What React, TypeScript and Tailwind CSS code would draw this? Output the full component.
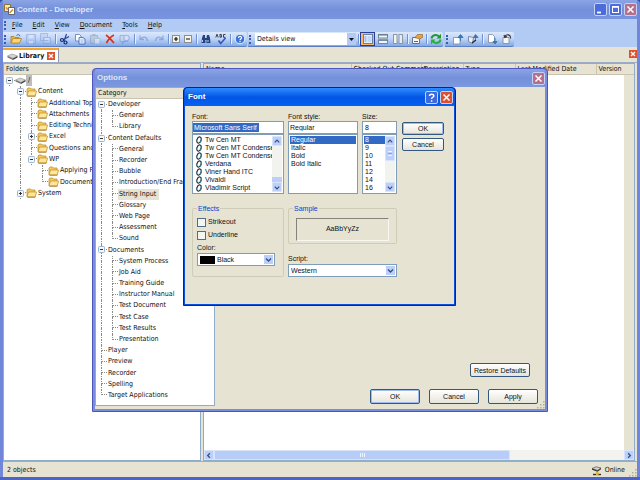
import type { ReactNode } from "react";
import clsx from "clsx";

type Guide = "none" | "line" | "tee" | "end" | "plus" | "minus" | "root";

type Node = { label: string; guides: Guide[]; selected?: boolean };

const folders: Node[] = [
  { label: "Content", guides: ["none", "minus"] },
  { label: "Additional Topics", guides: ["none", "line", "tee"] },
  { label: "Attachments", guides: ["none", "line", "tee"] },
  { label: "Editing Techniques", guides: ["none", "line", "tee"] },
  { label: "Excel", guides: ["none", "line", "plus"] },
  { label: "Questions and Answers", guides: ["none", "line", "tee"] },
  { label: "WP", guides: ["none", "line", "minus"] },
  { label: "Applying Formats", guides: ["none", "line", "none", "tee"] },
  { label: "Document Basics", guides: ["none", "line", "none", "end"] },
  { label: "System", guides: ["none", "plus"] },
];

const categories: Node[] = [
  { label: "Developer", guides: ["root"] },
  { label: "General", guides: ["line", "tee"] },
  { label: "Library", guides: ["line", "end"] },
  { label: "Content Defaults", guides: ["minus"] },
  { label: "General", guides: ["line", "tee"] },
  { label: "Recorder", guides: ["line", "tee"] },
  { label: "Bubble", guides: ["line", "tee"] },
  { label: "Introduction/End Frames", guides: ["line", "tee"] },
  { label: "String Input", guides: ["line", "tee"], selected: true },
  { label: "Glossary", guides: ["line", "tee"] },
  { label: "Web Page", guides: ["line", "tee"] },
  { label: "Assessment", guides: ["line", "tee"] },
  { label: "Sound", guides: ["line", "end"] },
  { label: "Documents", guides: ["minus"] },
  { label: "System Process", guides: ["line", "tee"] },
  { label: "Job Aid", guides: ["line", "tee"] },
  { label: "Training Guide", guides: ["line", "tee"] },
  { label: "Instructor Manual", guides: ["line", "tee"] },
  { label: "Test Document", guides: ["line", "tee"] },
  { label: "Test Case", guides: ["line", "tee"] },
  { label: "Test Results", guides: ["line", "tee"] },
  { label: "Presentation", guides: ["line", "end"] },
  { label: "Player", guides: ["tee"] },
  { label: "Preview", guides: ["tee"] },
  { label: "Recorder", guides: ["tee"] },
  { label: "Spelling", guides: ["tee"] },
  { label: "Target Applications", guides: ["end"] },
];

const fonts = [
  "Tw Cen MT",
  "Tw Cen MT Condensed",
  "Tw Cen MT Condensed Extra",
  "Verdana",
  "Viner Hand ITC",
  "Vivaldi",
  "Vladimir Script",
];

function GuideCell({ kind }: { kind: Guide }) {
  const boxed = kind === "plus" || kind === "minus" || kind === "root";
  return (
    <span className="relative flex w-[11px] shrink-0 flex-col self-stretch pl-[5px]">
      {kind !== "none" && (
        <>
          <span
            className={clsx(
              "h-1/2 border-dotted border-[#8a8a86]",
              kind !== "root" && "border-l",
              kind !== "line" && "border-b"
            )}
          />
          <span
            className={clsx("h-1/2 border-dotted border-[#8a8a86]", kind !== "end" && "border-l")}
          />
        </>
      )}
      {boxed && (
        <svg viewBox="0 0 7 7" className="absolute left-[2px] top-[2px] h-[7px] w-[7px]">
          <rect x=".5" y=".5" width="6" height="6" rx="1" fill="#f4f6f8" stroke="#9cb4d0" />
          <path d="M2 3.5h3" stroke="#333" />
          {kind === "plus" && <path d="M3.5 2v3" stroke="#333" />}
        </svg>
      )}
    </span>
  );
}

function FolderIcon() {
  return (
    <svg viewBox="0 0 11 10" className="h-[10px] w-[11px] shrink-0">
      <path d="M1 8.5V2l1-1h2.5l1 1H9v6.5z" fill="#f3c85a" stroke="#b98a28" strokeWidth=".7" />
      <path d="M1 9l1.5-5h8L9.300 9z" fill="#ffe79a" stroke="#c08a24" strokeWidth=".7" />
      <path d="M1.500 9.200h7.800" stroke="#94661a" strokeWidth=".7" />
    </svg>
  );
}

function DriveIcon() {
  return (
    <svg viewBox="0 0 11 9" className="h-[9px] w-[11px] shrink-0">
      <path d="M.5 4L5 2l5.500 2L6 6.500z" fill="#d4d4d2" stroke="#8a8a88" strokeWidth=".6" />
      <path d="M.5 4v1.500L6 8V6.500z" fill="#777" />
      <path d="M6 6.500v1.500l4.500-2.500V4z" fill="#444" />
    </svg>
  );
}

function CaptionButton({ kind, tone }: { kind: "min" | "max" | "close" | "help"; tone: string }) {
  return (
    <button
      type="button"
      aria-label={kind}
      className={clsx(
        "flex h-[13px] w-[13px] items-center justify-center rounded-[2px] border border-[#c4d2f4]",
        tone
      )}
    >
      <svg viewBox="0 0 11 11" className="h-[11px] w-[11px]" fill="none" stroke="#fff">
        {kind === "min" && <path d="M2 8.500h4" strokeWidth="1.800" />}
        {kind === "max" && (
          <>
            <rect x="2.500" y="2.500" width="6" height="6" />
            <path d="M2 3h7" strokeWidth="1.600" />
          </>
        )}
        {kind === "close" && <path d="M2.500 2.500l6 6M8.500 2.500l-6 6" strokeWidth="1.500" />}
        {kind === "help" && (
          <path d="M3.500 4C3.500 1.500 8 1.500 7.800 4 7.600 5.300 5.600 5.300 5.600 7M5.600 8.200v1.500" strokeWidth="1.500" />
        )}
      </svg>
    </button>
  );
}

function PushButton({ children, primary, className }: { children: ReactNode; primary?: boolean; className: string }) {
  return (
    <button
      type="button"
      className={clsx(
        "rounded-[2px] border border-[#33587e] bg-linear-to-b from-white to-[#e6e4da] text-center font-[Liberation_Sans,sans-serif] text-[7px] leading-[11px]",
        primary && "shadow-[inset_0_0_0_1px_#9dbcf2]",
        className
      )}
    >
      {children}
    </button>
  );
}

function Arrow({ dir }: { dir: "up" | "down" | "left" | "right" }) {
  const paths = {
    up: "M2 5.500L4.500 3 7 5.500",
    down: "M2 3.500L4.500 6 7 3.500",
    left: "M5.500 2L3 4.500 5.500 7",
    right: "M3.500 2L6 4.500 3.500 7",
  };
  return (
    <svg viewBox="0 0 9 9" className="h-[9px] w-[9px]">
      <path d={paths[dir]} fill="none" stroke="#36507c" strokeWidth="1.400" />
    </svg>
  );
}

function ScrollButton({ dir }: { dir: "up" | "down" | "left" | "right" }) {
  return (
    <button
      type="button"
      aria-label={`Scroll ${dir}`}
      className="flex h-[10px] w-[10px] shrink-0 items-center justify-center rounded-[1px] border border-[#d8e4fc] bg-[#bccffa]"
    >
      <Arrow dir={dir} />
    </button>
  );
}

function ToolButton({ label, children, narrow, off, on }: { label: string; children: ReactNode; narrow?: boolean; off?: boolean; on?: boolean }) {
  return (
    <button
      type="button"
      aria-label={label}
      disabled={off}
      className={clsx(
        "flex h-[14px] shrink-0 items-center justify-center",
        narrow ? "w-[12px]" : "w-[15px]",
        off && "opacity-50",
        on && "border border-[#2c3c94] bg-[#fbb668]"
      )}
    >
      <svg viewBox="0 0 12 12" className="h-[12px] w-[12px] shrink-0" fill="none">
        {children}
      </svg>
    </button>
  );
}

function Grip() {
  return <span className="mr-px ml-px h-[9px] w-[3px] shrink-0 border-l-2 border-dotted border-[#3c5da8]" />;
}

function Sep() {
  return (
    <span className="flex w-[4px] shrink-0 justify-center">
      <span className="h-[10px] w-px bg-[#6f92d0] shadow-[1px_0_0_#e8f0fe]" />
    </span>
  );
}

const groupClass =
  "flex h-[15px] items-center rounded-r-[2px] border-b border-[#5b80c4] bg-linear-to-b from-[#dbe8fd] via-[#bdd3f7] to-[#82a8e4]";

function Toolbar() {
  return (
    <div className="flex gap-px bg-[#b2cbf5]">
      <div className={groupClass}>
        <Grip />
        <ToolButton label="Open">
          <path d="M1 10V3.500h3l1 1h4V6" fill="#f0b840" stroke="#a87418" strokeWidth=".7" />
          <path d="M1 10l2-4.500h8.500L9.500 10z" fill="#ffd970" stroke="#a87418" strokeWidth=".7" />
          <path d="M6.500 2.500c1.500-1.500 3-1 3.500.7" stroke="#3a5ca8" />
        </ToolButton>
        <ToolButton label="Save" off>
          <path d="M1.500 1.500h9v9h-9z" fill="#a9bfe8" stroke="#7e9ad0" />
          <path d="M3.500 2h5v3.500h-5zM4 8h4v2.500H4z" fill="#e4edfc" />
        </ToolButton>
        <ToolButton label="Save all" off>
          <path d="M.5.5h7v7h-7zM3.500 4.500h7v6h-7z" fill="#bccdf0" stroke="#7e9ad0" />
          <path d="M5 5h4v2H5z" fill="#e4edfc" />
        </ToolButton>
        <Sep />
        <ToolButton label="Cut">
          <path d="M7.500 1L5 8M10 3.500L4 7" stroke="#26489a" strokeWidth="1.200" />
          <circle cx="3" cy="7" r="1.500" stroke="#122c74" strokeWidth="1.200" />
          <circle cx="6.500" cy="9.500" r="1.500" stroke="#122c74" strokeWidth="1.200" />
        </ToolButton>
        <ToolButton label="Copy">
          <path d="M1.500 1.500h4l1.500 1.500v5H1.500z" fill="#fff" stroke="#5478c0" strokeWidth=".8" />
          <path d="M5 4.500h4l2 1.500v5H5z" fill="#e8f0ff" stroke="#3c60b0" strokeWidth=".8" />
          <path d="M6.500 7h3M6.500 9h3" stroke="#7c9cdc" strokeWidth=".7" />
        </ToolButton>
        <ToolButton label="Paste" off>
          <path d="M1.500 2.500h7v8h-7z" fill="#b4bccc" stroke="#8491ad" />
          <path d="M3.500 1h3v2h-3z" fill="#8491ad" />
          <path d="M5.500 5.500h5.500v5.500H5.500z" fill="#eef3fc" stroke="#8aa" strokeWidth=".8" />
        </ToolButton>
        <ToolButton label="Delete">
          <path d="M2 2c3 2 5 5 8 8M10 2C7 3.500 4 7 2.500 10" stroke="#d8321a" strokeWidth="1.700" />
        </ToolButton>
        <ToolButton label="Properties" off>
          <path d="M1 2.500h8v6H1z" fill="#c6d4ee" stroke="#6f8cc4" />
          <circle cx="7.500" cy="5" r="2.800" fill="#dfe9fb" stroke="#6f8cc4" />
          <path d="M3 11l3-3.500" stroke="#6f8cc4" strokeWidth="1.400" />
        </ToolButton>
        <Sep />
        <ToolButton label="Undo" off>
          <path d="M2 2.500v4h4M2 6.500C4.500 3 9 3 9.500 8" stroke="#5b7fc8" strokeWidth="1.300" />
        </ToolButton>
        <ToolButton label="Redo" off>
          <path d="M10 2.500v4H6M10 6.500C7.500 3 3 3 2.500 8" stroke="#5b7fc8" strokeWidth="1.300" />
        </ToolButton>
        <Sep />
        <ToolButton label="Expand" narrow>
          <rect x="2.500" y="2.500" width="7" height="7" fill="#f7f5e8" stroke="#8a8f98" />
          <path d="M4 6h4M6 4v4" stroke="#111" strokeWidth="1.200" />
        </ToolButton>
        <ToolButton label="Collapse" narrow>
          <rect x="2.500" y="2.500" width="7" height="7" fill="#f7f5e8" stroke="#8a8f98" />
          <path d="M4 6h4" stroke="#333" strokeWidth="1.200" />
        </ToolButton>
        <Sep />
        <ToolButton label="Find">
          <path d="M3 2h2v3l.5 5H1.500l.5-5zM7 2h2l1 3 .5 5h-4L6.500 5z" fill="#23427e" />
          <path d="M5 5h2v2H5z" fill="#23427e" />
          <path d="M2.500 7v2M8 7v2" stroke="#b8d0f4" />
        </ToolButton>
        <ToolButton label="Spelling">
          <path d="M.8 4.500L2 1.200l1.200 3.300M5 1.200v3h1.400V1.500H5M10.500 1.500H8.500v2.800h2" stroke="#333" strokeWidth=".9" />
          <path d="M3.500 7.500l2.200 3L10.500 5" stroke="#3559b4" strokeWidth="1.600" />
        </ToolButton>
        <Sep />
        <ToolButton label="Help">
          <circle cx="6" cy="6" r="4.800" fill="#3c74d4" stroke="#e8f0fc" />
          <path d="M4.500 5C4.500 2.800 7.800 3 7.500 5 7.300 6 6 6 6 7.200M6 8v1.200" stroke="#fff" strokeWidth="1.200" />
        </ToolButton>
      </div>
      <div className={groupClass}>
        <Grip />
        <div className="relative ml-[2px] flex h-[12px] w-[101px] items-center bg-white">
          <select aria-label="View" className="h-[12px] w-full appearance-none pl-[2px] leading-[12px]">
            <option>Details view</option>
          </select>
          <span className="pointer-events-none absolute inset-y-0 right-0 flex w-[9px] items-center justify-center bg-[#b3caf4]">
            <svg viewBox="0 0 5 3" className="h-[3px] w-[5px]">
              <path d="M0 0h5L2.500 3z" fill="#111" />
            </svg>
          </span>
        </div>
        <Sep />
        <ToolButton label="Single pane" on>
          <rect x="1.500" y="1.500" width="9" height="9" fill="#e8f0fc" stroke="#68809c" />
          <path d="M2.500 3h2v6h-2z" fill="#a4c0ec" />
          <path d="M5.500 3h4v6h-4z" fill="#c2d8fa" />
        </ToolButton>
        <ToolButton label="Split rows">
          <rect x="1.500" y="1.500" width="9" height="3.500" fill="#f0f5fd" stroke="#74889c" />
          <rect x="1.500" y="7" width="9" height="3.500" fill="#f0f5fd" stroke="#74889c" />
          <path d="M1 2h10M1 7.200h10" stroke="#5e7688" />
        </ToolButton>
        <ToolButton label="Split columns">
          <rect x="1.500" y="1.500" width="3.500" height="9" fill="#f4f4ee" stroke="#8c98a4" />
          <rect x="7" y="1.500" width="3.500" height="9" fill="#e4ecf8" stroke="#8c98a4" />
        </ToolButton>
        <Sep />
        <ToolButton label="Properties">
          <path d="M1.500 4.500h7v6h-7z" fill="#f4f6fa" stroke="#62748c" />
          <path d="M3 8.500h4" stroke="#4a6898" />
          <path d="M4 4.500l2.500-3h5v3l-3 1.500z" fill="#e9a33c" stroke="#8a5a18" strokeWidth=".6" />
        </ToolButton>
        <Sep />
        <ToolButton label="Refresh">
          <path d="M1.500 5.500C2 2 6.500 1 9 3.500" stroke="#1f9a2c" strokeWidth="2" />
          <path d="M11 .8v4.700H6.500z" fill="#1f9a2c" />
          <path d="M10.500 6.500C10 10 5.500 11 3 8.500" stroke="#2bb038" strokeWidth="2" />
          <path d="M1 11.200V6.500h4.500z" fill="#2bb038" />
        </ToolButton>
      </div>
      <div className={clsx(groupClass, "ml-px")}>
        <Grip />
        <ToolButton label="Check in">
          <path d="M1.500 4.500h5l1.500 1v5.500H1.500z" fill="#fff" stroke="#7888a0" strokeWidth=".8" />
          <path d="M8.500 8V3.500M6 4.500L8.500 1.500 11 4.500z" fill="#3c78b0" stroke="#3c78b0" />
        </ToolButton>
        <ToolButton label="Undo check out">
          <path d="M1.500 3.500l5 1-1 6-4-2z" fill="#eee" stroke="#66768c" strokeWidth=".8" />
          <path d="M5 10l4-3" stroke="#223" strokeWidth="1.200" />
          <path d="M8.500 7V3.500M6.500 4.500L8.500 1.500 11 4.500z" fill="#3c78b0" stroke="#3c78b0" />
        </ToolButton>
        <Sep />
        <ToolButton label="Get version">
          <path d="M2.500 1.500h4l2 2v6h-6z" fill="#fff" stroke="#7888a0" strokeWidth=".8" />
          <path d="M9 5v4M7 8.500l2 2.500 2-2.500z" fill="#3c78b0" stroke="#3c78b0" />
        </ToolButton>
        <ToolButton label="History">
          <path d="M2 4.500h6v6H2z" fill="#f4f6fa" stroke="#7888a0" strokeWidth=".8" />
          <path d="M4 3.500C5.500.5 10 1.500 9.500 5.500M3 2l.8 2.500L6 3.500" stroke="#333" strokeWidth="1.100" />
        </ToolButton>
      </div>
    </div>
  );
}

function Tree({ nodes, icon }: { nodes: Node[]; icon?: boolean }) {
  return (
    <>
      {nodes.map((node, i) => (
        <li key={i} className="flex min-h-0 flex-1 items-center whitespace-nowrap">
          {node.guides.map((g, j) => (
            <GuideCell key={j} kind={g} />
          ))}
          {icon && <FolderIcon />}
          <span className={clsx("px-px leading-[11px]", node.selected && "bg-[#e6e3d3] pr-[3px]")}>
            {node.label}
          </span>
        </li>
      ))}
    </>
  );
}

function OptionsDialog() {
  return (
    <section
      aria-label="Options"
      className="absolute left-[92px] top-[68px] flex h-[344px] w-[456px] flex-col rounded-t-[4px] border border-[#4c56bc] bg-[#7a8cdc] px-[2px] pb-[2px]"
    >
      <header className="flex h-[18px] shrink-0 items-center justify-between rounded-t-[3px] bg-linear-to-b from-[#8ba4e6] via-[#7490da] to-[#7c98e0] pl-[2px]">
        <h2 className="font-[Liberation_Sans,sans-serif] text-[8px] font-bold text-[#dde6fa]">Options</h2>
        <CaptionButton kind="close" tone="bg-[#b4708c]" />
      </header>
      <div className="flex min-h-0 flex-1 bg-[#e6e3d3] pb-[3px]">
        <div className="flex w-[120px] shrink-0 flex-col overflow-hidden border border-[#8eaccc] bg-white">
          <h3 className="h-[11px] shrink-0 border-b border-[#c8c4b0] bg-[#e6e3d3] pl-[2px] leading-[10px]">Category</h3>
          <ul className="mb-[4px] flex flex-1 flex-col">
            <Tree nodes={categories} />
          </ul>
        </div>
        <div className="relative flex flex-1 flex-col items-end justify-end gap-[12px] pr-[7px] pb-[2px]">
          <PushButton className="mr-[8px] h-[14px] w-[60px]">Restore Defaults</PushButton>
          <div className="flex gap-[9px]">
            <PushButton primary className="h-[15px] w-[50px]">OK</PushButton>
            <PushButton className="h-[15px] w-[50px]">Cancel</PushButton>
            <PushButton className="h-[15px] w-[50px]">Apply</PushButton>
          </div>
          <SizeGrip className="absolute -bottom-[3px] right-0" />
        </div>
      </div>
    </section>
  );
}

function SizeGrip({ className }: { className?: string }) {
  return (
    <svg viewBox="0 0 8 8" className={clsx("h-[8px] w-[8px]", className)} fill="#b4b09c">
      <path d="M6 0h1.500v1.500H6zM6 3h1.500v1.500H6zM6 6h1.500v1.500H6zM3 3h1.500v1.500H3zM3 6h1.500v1.500H3zM0 6h1.500v1.500H0z" />
    </svg>
  );
}

const fieldClass = "block h-[13px] w-full border border-[#7f9db9] bg-white leading-[11px]";
const listClass = "flex h-[60px] border border-[#7f9db9] bg-white p-px";
const checkClass = "h-[9px] w-[9px] appearance-none border border-[#4c6f90] bg-[#f4f4f0]";

function ListBox({ label, items, selected, icon, children }: { label: string; items: string[]; selected?: string; icon?: boolean; children?: ReactNode }) {
  return (
    <div className={listClass}>
      <ul role="listbox" aria-label={label} className="min-w-0 flex-1 overflow-hidden">
        {items.map((item) => (
          <li
            key={item}
            role="option"
            aria-selected={item === selected}
            className={clsx(
              "flex h-[8px] items-center gap-[2px] whitespace-nowrap pl-px leading-[8px]",
              item === selected && "bg-[#316ac5] text-white"
            )}
          >
            {icon && (
              <svg viewBox="0 0 8 8" className="h-[8px] w-[8px] shrink-0" fill="none">
                <ellipse cx="4" cy="4" rx="2" ry="3.200" stroke="#1c2c3c" strokeWidth="1.200" transform="rotate(20 4 4)" />
                <path d="M6.200 1.500c.7 1.500.2 3.500-1 5" stroke="#2c8a94" strokeWidth="1.100" />
              </svg>
            )}
            {item}
          </li>
        ))}
      </ul>
      {children}
    </div>
  );
}

function DropDown({ id, value, children }: { id: string; value: string; children?: ReactNode }) {
  return (
    <div className="relative flex h-[13px] items-center border border-[#7f9db9] bg-white pl-[2px]">
      {children}
      <select id={id} className="h-[11px] w-full appearance-none leading-[11px]">
        <option>{value}</option>
      </select>
      <span className="pointer-events-none absolute inset-y-0 right-0 flex w-[11px] items-center justify-center border border-white bg-[#bccffa]">
        <Arrow dir="down" />
      </span>
    </div>
  );
}

function FontDialog() {
  return (
    <section
      aria-label="Font"
      className="absolute left-[183px] top-[87px] flex h-[219px] w-[273px] flex-col rounded-t-[4px] border border-[#0022a8] bg-[#0c50e0] px-px pb-px font-[Liberation_Sans,sans-serif]"
    >
      <header className="flex h-[18px] shrink-0 items-center gap-[2px] rounded-t-[3px] bg-linear-to-b from-[#2f8cff] via-[#0355e4] to-[#0560f4] pl-[3px] pr-px">
        <h2 className="flex-1 text-[8px] font-bold text-white">Font</h2>
        <CaptionButton kind="help" tone="bg-[#3a68e0]" />
        <CaptionButton kind="close" tone="bg-[#dc5030]" />
      </header>
      <div className="flex flex-1 flex-col bg-[#e6e3d3] px-[7px] pt-[6px]">
        <div className="flex gap-[4px]">
          <div className="w-[92px]">
            <label htmlFor="font" className="block h-[9px] leading-[9px]">Font:</label>
            <div className={fieldClass}>
              <input
                id="font"
                defaultValue="Microsoft Sans Serif"
                className="mt-px block h-[9px] w-[66px] bg-[#316ac5] pl-px leading-[9px] text-white"
              />
            </div>
            <ListBox label="Fonts" items={fonts} icon>
              <div className="flex w-[10px] flex-col justify-between bg-[#f2f2ee]">
                <ScrollButton dir="up" />
                <div className="flex flex-col">
                  <span className="h-[5px] bg-[#bccffa]" />
                  <ScrollButton dir="down" />
                </div>
              </div>
            </ListBox>
          </div>
          <div className="w-[70px]">
            <label htmlFor="style" className="block h-[9px] leading-[9px]">Font style:</label>
            <input id="style" defaultValue="Regular" className={clsx(fieldClass, "pl-px")} />
            <ListBox label="Styles" items={["Regular", "Italic", "Bold", "Bold Italic"]} selected="Regular" />
          </div>
          <div className="w-[35px]">
            <label htmlFor="size" className="block h-[9px] leading-[9px]">Size:</label>
            <input id="size" defaultValue="8" className={clsx(fieldClass, "pl-[2px]")} />
            <ListBox label="Sizes" items={["8", "9", "10", "11", "12", "14", "16"]} selected="8">
              <div className="flex w-[10px] flex-col bg-[#f2f2ee]">
                <ScrollButton dir="up" />
                <span className="flex h-[15px] flex-col items-center justify-center gap-px rounded-[1px] border border-[#d8e4fc] bg-[#bccffa]">
                  <i className="h-px w-[4px] bg-[#eef4fe]" />
                  <i className="h-px w-[4px] bg-[#8ca8e0]" />
                  <i className="h-px w-[4px] bg-[#eef4fe]" />
                </span>
                <span className="flex-1" />
                <ScrollButton dir="down" />
              </div>
            </ListBox>
          </div>
          <div className="ml-px flex flex-col gap-[3px] pt-[10px]">
            <PushButton primary className="h-[13px] w-[42px]">OK</PushButton>
            <PushButton className="h-[13px] w-[42px]">Cancel</PushButton>
          </div>
        </div>
        <div className="mt-[10px] flex items-start gap-[4px]">
          <fieldset className="h-[73px] w-[92px] rounded-[2px] border border-[#cfccb8] px-[4px]">
            <legend className="px-px leading-[9px] text-[#0046d5]">Effects</legend>
            <label className="mt-[5px] flex h-[9px] items-center gap-[2px]">
              <input type="checkbox" className={checkClass} />
              Strikeout
            </label>
            <label className="mt-[4px] flex h-[9px] items-center gap-[2px]">
              <input type="checkbox" className={checkClass} />
              Underline
            </label>
            <label htmlFor="color" className="mt-[3px] block h-[10px] leading-[10px]">Color:</label>
            <div className="w-[78px]">
              <DropDown id="color" value="Black">
                <span className="mr-[2px] h-[8px] w-[15px] shrink-0 bg-black" />
              </DropDown>
            </div>
          </fieldset>
          <div className="w-[109px]">
            <fieldset className="h-[40px] rounded-[2px] border border-[#cfccb8] px-[7px]">
              <legend className="-ml-[3px] px-px leading-[9px] text-[#0046d5]">Sample</legend>
              <div className="mt-[5px] flex h-[23px] items-center justify-center border border-t-[#84827a] border-r-[#f8f7f0] border-b-[#f8f7f0] border-l-[#84827a]">
                AaBbYyZz
              </div>
            </fieldset>
            <label htmlFor="script" className="mt-[10px] block h-[10px] leading-[10px]">Script:</label>
            <DropDown id="script" value="Western" />
          </div>
        </div>
      </div>
    </section>
  );
}

const columns = [
  ["Name", "w-[147px]"],
  ["Checked Out Comment", "w-[70px]"],
  ["Description", "w-[42px]"],
  ["Type", "w-[52px]"],
  ["Last Modified Date", "w-[81px]"],
  ["Version", ""],
];

export default function App() {
  return (
    <div className="relative flex h-screen w-full flex-col overflow-hidden bg-[#1c48a0] font-[DejaVu_Sans_Condensed,sans-serif] text-[7px] text-[#111]">
      <div className="flex min-h-0 flex-1 flex-col rounded-t-[4px] border-b-3 border-[#4c64c4] bg-[#7086d8] pr-[3px] pl-[3px]">
        <header className="flex h-[19px] shrink-0 items-center gap-[2px] bg-linear-to-b from-[#8aa4e6] via-[#7490da] to-[#7894de] pl-px">
          <svg viewBox="0 0 11 11" className="h-[11px] w-[11px]">
            <path d="M.5.5h6v7h-6z" fill="#f8e9b0" stroke="#8a7430" />
            <path d="M4.500 3.500h6v7h-6z" fill="#fff" stroke="#5c6478" />
            <path d="M2 3.500l2 2M5.500 9l3.500-3.500" stroke="#d88a18" strokeWidth="1.400" />
          </svg>
          <h1 className="flex-1 font-[Liberation_Sans,sans-serif] text-[8px] font-bold text-[#dde6fa]">Content - Developer</h1>
          <CaptionButton kind="min" tone="bg-[#4c6cdc]" />
          <CaptionButton kind="max" tone="bg-[#4c6cdc]" />
          <CaptionButton kind="close" tone="bg-[#b4708c]" />
        </header>
        <nav className="flex h-[13px] shrink-0 items-center bg-[#b2cbf5]">
          <Grip />
          <div className="flex gap-[10px] pl-[4px]">
            {["File", "Edit", "View", "Document", "Tools", "Help"].map((item) => (
              <button key={item} type="button" className="leading-[11px]">
                <u>{item[0]}</u>
                {item.slice(1)}
              </button>
            ))}
          </div>
        </nav>
        <Toolbar />
        <div className="flex h-[15px] shrink-0 items-end justify-between bg-[#e6e3d3]">
          <div className="flex h-[14px] items-center gap-px border-t-2 border-r border-t-[#f4a52c] border-r-[#8c98ac] bg-white pr-[3px] pl-[4px]">
            <DriveIcon />
            <span className="font-bold">Library</span>
            <CloseMark label="Close tab" />
          </div>
          <div className="mb-[4px]">
            <CloseMark label="Close panel" />
          </div>
        </div>
        <main className="flex min-h-0 flex-1 gap-[2px] border-t border-[#9cacc8] bg-[#e6e3d3] pr-[2px]">
          <section className="flex w-[198px] shrink-0 flex-col border border-[#8eaccc] bg-white">
            <h2 className="h-[11px] shrink-0 border-b border-[#c8c4b0] bg-[#e6e3d3] pl-[2px] leading-[10px]">Folders</h2>
            <ul className="flex h-[124px] flex-col">
              <li className="flex flex-1 items-center">
                <GuideCell kind="root" />
                <DriveIcon />
                <span className="bg-[#bdbdbd] px-[2px] leading-[11px]">/</span>
              </li>
              <Tree nodes={folders} icon />
            </ul>
          </section>
          <section className="flex min-w-0 flex-1 flex-col border border-[#8eaccc] bg-white">
            <table className="w-full table-fixed border-b border-[#c8c4b0] bg-[#e6e3d3]">
              <thead>
                <tr className="text-left whitespace-nowrap">
                  {columns.map(([name, width]) => (
                    <th
                      key={name}
                      className={clsx("border-r border-[#c8c4b0] p-0 pt-px pl-[2px] leading-[9px] font-normal last:border-r-0", width)}
                    >
                      {name}
                    </th>
                  ))}
                </tr>
              </thead>
            </table>
            <div className="flex flex-1">
              <div className="flex-1" />
              <div className="w-[10px] bg-[#e6e3d3]" />
            </div>
            <div className="flex h-[10px] shrink-0 bg-[#f2f2ee]">
              <ScrollButton dir="left" />
              <div className="flex w-[296px] items-center justify-center gap-px rounded-[1px] border border-[#d8e4fc] bg-[#b8ccf8]">
                <i className="h-[4px] w-px bg-[#eef4fe]" />
                <i className="h-[4px] w-px bg-[#eef4fe]" />
                <i className="h-[4px] w-px bg-[#eef4fe]" />
              </div>
              <div className="flex-1" />
              <ScrollButton dir="right" />
            </div>
          </section>
        </main>
        <footer className="flex h-[16px] shrink-0 items-center border-t border-[#9cacc8] bg-[#e6e3d3] pt-[2px] pl-[4px]">
          <span className="flex-1">2 objects</span>
          <svg viewBox="0 0 12 10" className="mr-[2px] h-[10px] w-[12px]">
            <path d="M1 2.500L5 .8l5 1.200-3.500 2.500z" fill="#d0d0cc" stroke="#444" strokeWidth=".6" />
            <path d="M1 2.500v1.200l5.500 2V4.500zM6.500 4.500v1.200L10 3.200V2z" fill="#333" />
            <path d="M2 8.500h8" stroke="#333" strokeWidth="1.400" />
            <path d="M5 6h2.500v3H5z" fill="#e0b838" />
          </svg>
          <span>Online</span>
          <SizeGrip className="ml-[4px] self-end" />
        </footer>
      </div>
      <OptionsDialog />
      <FontDialog />
    </div>
  );
}

function CloseMark({ label }: { label: string }) {
  return (
    <button type="button" aria-label={label} className="ml-[2px] block h-[8px] w-[8px] bg-[#e0502c]">
      <svg viewBox="0 0 8 8" className="h-[8px] w-[8px]">
        <path d="M2 2l4 4M6 2L2 6" stroke="#fff" strokeWidth="1.300" />
      </svg>
    </button>
  );
}
